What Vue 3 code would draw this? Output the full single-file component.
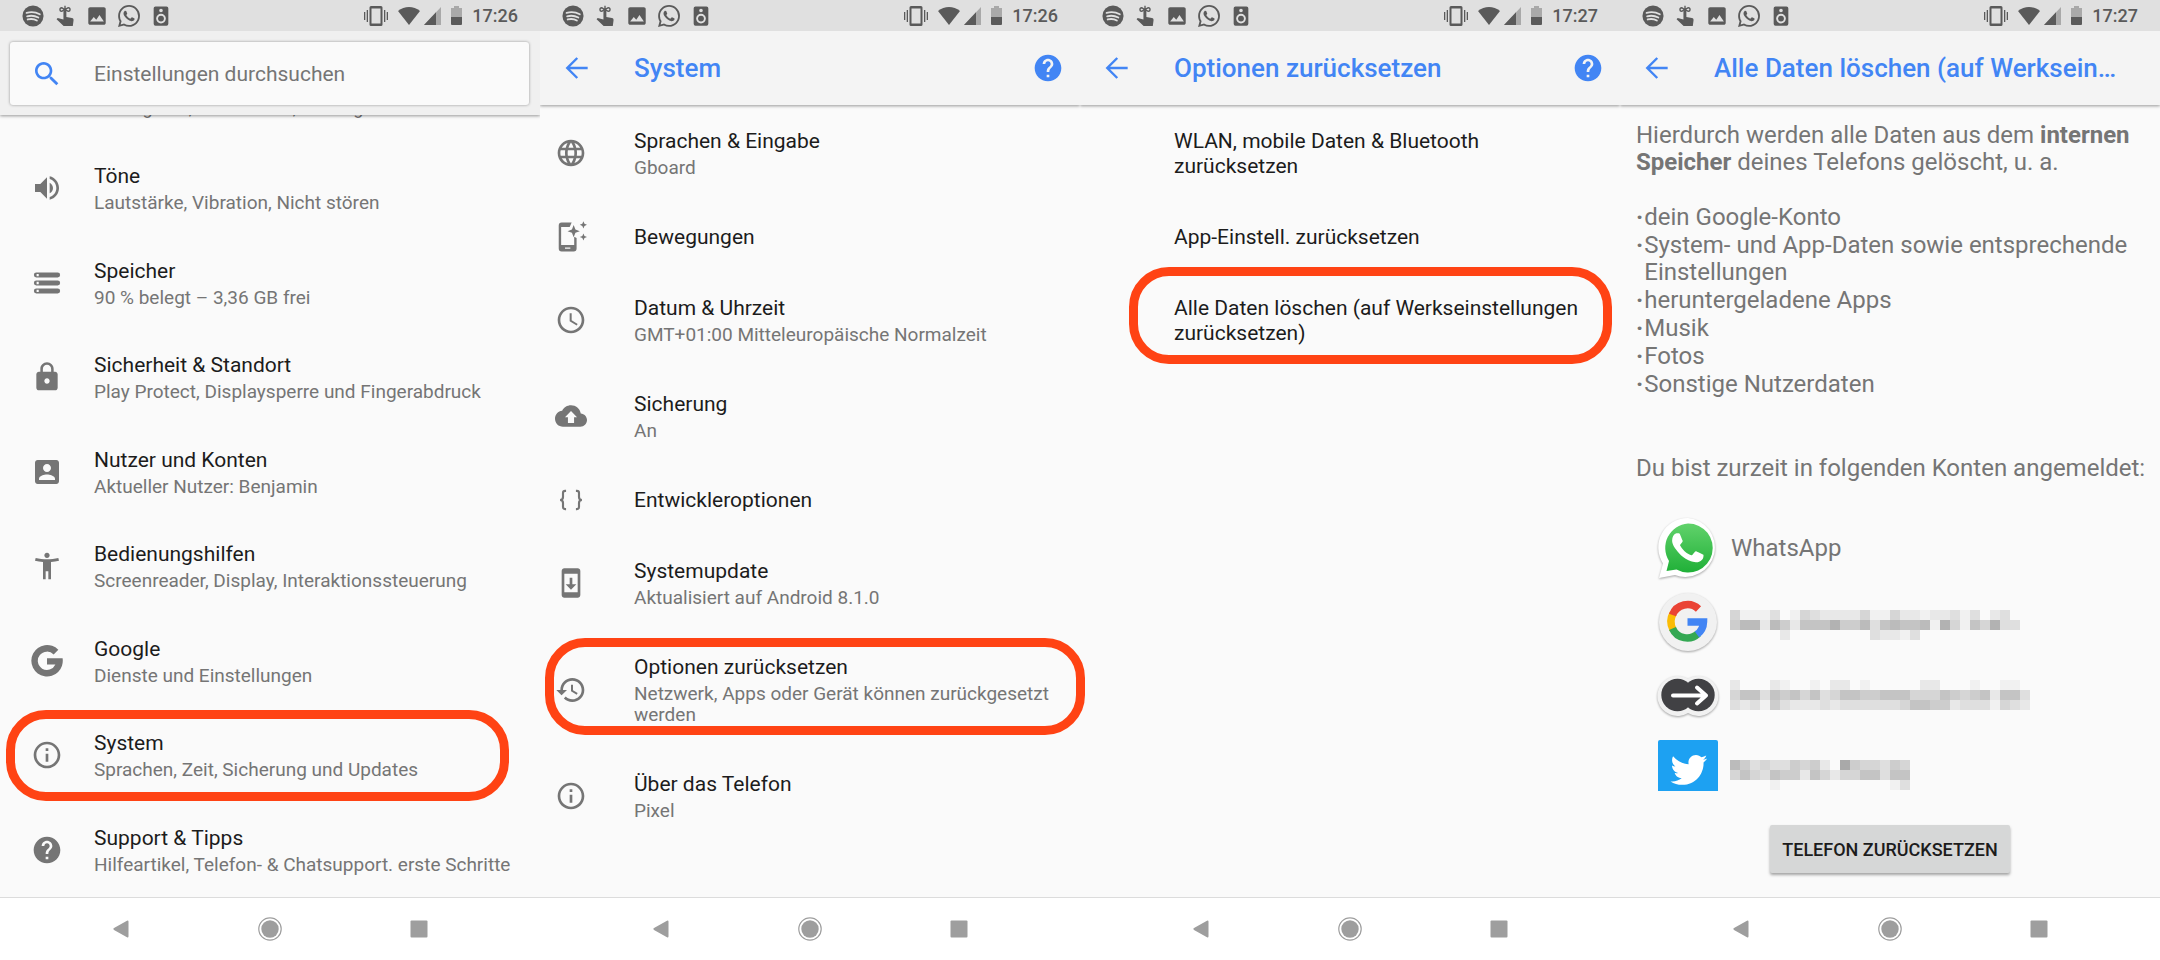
<template>
  <main class="board">
    <section v-for="screen in screens" :key="screen.id" class="phone" :class="screen.id">
      <div class="status-bar">
        <div class="status-group">
          <svg class="status-icon" viewBox="0 0 24 24">
            <circle cx="12" cy="12" r="11.5" />
            <path class="cut" d="M5 8.6c5-1.400 10-.9 14.400 1.500M5.600 12.300c4.200-1.100 8.400-.7 12.200 1.300M6.200 15.800c3.500-.9 7-.6 10 1.100" />
          </svg>
          <svg class="status-icon" viewBox="0 0 24 24">
            <path d="M10.300 6h3.200v7l6 1.200c1.500.300 2 1.200 1.800 2.600L20.500 23h-10L2.800 15.500 4 14.300l6.300 1.500z" />
            <path class="thin" d="M12 .8v6M8.500 3a2 2 0 1 0 0 4l3-2zM15.500 3a2 2 0 1 1 0 4l-3.500-2z" />
          </svg>
          <svg class="status-icon" viewBox="0 0 24 24">
            <path d="M21.500 19.500v-15c0-1.100-.9-2-2-2h-15c-1.100 0-2 .9-2 2v15c0 1.100.9 2 2 2h15c1.100 0 2-.9 2-2zM8.500 13l2.700 3.200 3.500-5.200 4.800 7h-15z" />
          </svg>
          <svg class="status-icon" viewBox="0 0 24 24"><path :d="handset + bubble" /></svg>
          <svg class="status-icon" viewBox="0 0 24 24">
            <path fill-rule="evenodd" d="M6 1.500h12a2 2 0 0 1 2 2v17a2 2 0 0 1-2 2H6a2 2 0 0 1-2-2v-17a2 2 0 0 1 2-2zM12 4a2 2 0 1 0 0 4 2 2 0 0 0 0-4zm0 5.500a5.300 5.300 0 1 0 0 10.600 5.300 5.300 0 0 0 0-10.600z" />
            <circle cx="12" cy="14.800" r="3.200" />
          </svg>
        </div>
        <div class="status-group">
          <svg class="vibrate" viewBox="0 0 24 20">
            <path fill-rule="evenodd" d="M7 0h10a1.500 1.500 0 0 1 1.500 1.500v17A1.500 1.500 0 0 1 17 20H7a1.500 1.500 0 0 1-1.500-1.500v-17A1.500 1.500 0 0 1 7 0zm.5 2.500v15h9v-15zM0 6h1.300v8H0zM2.700 4H4v12H2.700zM20 4h1.300v12H20zM22.700 6H24v8h-1.300z" />
          </svg>
          <div class="signal-pair">
            <svg class="wifi" viewBox="0 0 22 18"><path d="M11 18L0 4C6.500-1.300 15.500-1.300 22 4z" /></svg>
            <svg class="cell" viewBox="0 0 17 18">
              <path class="faded" d="M17 0v18H0z" />
              <path d="M12 5.300V18H0z" />
            </svg>
          </div>
          <svg class="battery" viewBox="0 0 11 19">
            <path class="faded" d="M3 0h5v2h3v9H0V2h3z" />
            <path d="M0 11h11v7a1 1 0 0 1-1 1H1a1 1 0 0 1-1-1z" />
          </svg>
          <time>{{ screen.time }}</time>
        </div>
      </div>

      <header v-if="screen.id === 'settings'" class="search-header">
        <label class="search-card">
          <svg class="icon" viewBox="0 0 24 24"><path :d="icons.search" /></svg>
          <input v-model="query" type="text" placeholder="Einstellungen durchsuchen" aria-label="Einstellungen durchsuchen" />
        </label>
      </header>
      <header v-else class="app-bar">
        <button type="button" class="bar-btn" aria-label="Zurück">
          <svg class="icon" viewBox="0 0 24 24"><path class="arrow" d="M20 12H5M12.200 4.500L4.700 12l7.500 7.500" /></svg>
        </button>
        <h1>{{ screen.title }}</h1>
        <button v-if="screen.help" type="button" class="bar-btn" aria-label="Hilfe">
          <svg class="icon" viewBox="0 0 24 24"><path :d="icons.help" /></svg>
        </button>
      </header>

      <template v-if="screen.rows">
        <div v-if="screen.scrolled" class="cut-off">
          <a href="#" class="row">
            <span class="row-text">
              <span class="row-summary">{{ screen.scrolled }}</span>
            </span>
          </a>
        </div>
        <ul class="list">
          <li v-for="row in screen.rows" :key="row.title">
            <a href="#" class="row">
              <svg v-if="row.icon" class="icon" viewBox="0 0 24 24">
                <path :class="{ line: row.line }" :d="icons[row.icon]" />
              </svg>
              <span class="row-text">
                <span class="row-title">{{ row.title }}</span>
                <span v-if="row.summary" class="row-summary">{{ row.summary }}</span>
              </span>
            </a>
            <span v-if="row.marked" class="marker"></span>
          </li>
        </ul>
      </template>

      <template v-else>
        <div class="details">
          <p>Hierdurch werden alle Daten aus dem <b>internen Speicher</b> deines Telefons gelöscht, u. a.</p>
          <ul class="bullets">
            <li v-for="item in erased" :key="item"><span class="dot">·</span><span>{{ item }}</span></li>
          </ul>
          <p>Du bist zurzeit in folgenden Konten angemeldet:</p>
          <ul class="accounts">
            <li>
              <svg class="logo" viewBox="0 0 60 62">
                <defs>
                  <linearGradient id="wa" x1="0" y1="0" x2="0" y2="1">
                    <stop offset="0" stop-color="#61d26b" />
                    <stop offset="1" stop-color="#20b038" />
                  </linearGradient>
                </defs>
                <path class="plate" d="M30 1a29.500 29.500 0 1 1-13 57L1 61l4-14.500A29.500 29.500 0 0 1 30 1z" />
                <path fill="url(#wa)" d="M30 6.500a24.500 24.500 0 1 1-11.500 46L8.500 54l2.500-10A24.500 24.500 0 0 1 30 6.500z" />
                <path class="white" transform="translate(-1.500 -.5) scale(2.600)" :d="handset" />
              </svg>
              <span>WhatsApp</span>
            </li>
            <li>
              <svg class="logo" viewBox="0 0 60 62">
                <circle class="plate grey" cx="30" cy="31" r="29" />
                <g class="g-arcs">
                  <path stroke="#fbbc05" d="M15.300 22a17 17 0 0 0-.3 16.500" />
                  <path stroke="#ea4335" d="M14.500 24A16 16 0 0 1 40.500 18" />
                  <path stroke="#34a853" d="M14.500 37.500A16 16 0 0 0 40.200 42.500" />
                  <path stroke="#4285f4" d="M39 43.500A16 16 0 0 0 45.500 31H29.500" />
                </g>
              </svg>
              <svg class="mosaic" width="300" height="40" shape-rendering="crispEdges" aria-hidden="true">
                <rect v-for="c in cells(mosaics[0])" :key="c.key" :x="c.x" :y="c.y" width="10" height="10" :fill="c.fill" />
              </svg>
            </li>
            <li>
              <svg class="logo" viewBox="0 0 60 62">
                <path class="plate grey" d="M20 11a20 20 0 0 1 10 2.800A20 20 0 1 1 30 48 20 20 0 1 1 20 11z" />
                <circle class="dark" cx="19.500" cy="30" r="16.200" />
                <circle class="dark" cx="40.500" cy="30" r="16.200" />
                <path class="white-line" d="M15 30.500h33M39 22.500l9 8-9 8" />
              </svg>
              <svg class="mosaic" width="300" height="40" shape-rendering="crispEdges" aria-hidden="true">
                <rect v-for="c in cells(mosaics[1])" :key="c.key" :x="c.x" :y="c.y" width="10" height="10" :fill="c.fill" />
              </svg>
            </li>
            <li>
              <svg class="logo" viewBox="0 0 60 62">
                <rect y="1" width="60" height="60" rx="2" fill="#1da1f2" />
                <path class="white" transform="translate(11 11.500) scale(1.620)" :d="bird" />
              </svg>
              <svg class="mosaic" width="300" height="40" shape-rendering="crispEdges" aria-hidden="true">
                <rect v-for="c in cells(mosaics[2])" :key="c.key" :x="c.x" :y="c.y" width="10" height="10" :fill="c.fill" />
              </svg>
            </li>
          </ul>
        </div>
        <footer class="action">
          <button type="button" class="reset-btn">TELEFON ZURÜCKSETZEN</button>
        </footer>
      </template>

      <nav class="nav-bar">
        <button type="button" aria-label="Zurück">
          <svg viewBox="0 0 24 24"><path d="M19.500 4.500v15a1 1 0 0 1-1.500.7L5 12.900a1 1 0 0 1 0-1.800L18 3.800a1 1 0 0 1 1.500.7z" /></svg>
        </button>
        <button type="button" aria-label="Startbildschirm">
          <svg viewBox="0 0 24 24">
            <circle cx="12" cy="12" r="8.700" />
            <circle class="ring" cx="12" cy="12" r="11.200" />
          </svg>
        </button>
        <button type="button" aria-label="Letzte Apps">
          <svg viewBox="0 0 24 24"><rect x="3.500" y="3.500" width="17" height="17" rx="1" /></svg>
        </button>
      </nav>
    </section>
  </main>
</template>

<script setup>
import { ref } from 'vue'

const query = ref('')

const icons = {
  search: 'M15.5 14h-.79l-.28-.27C15.41 12.59 16 11.11 16 9.500 16 5.910 13.090 3 9.500 3S3 5.910 3 9.500 5.910 16 9.500 16c1.610 0 3.090-.59 4.230-1.570l.27.28v.79l5 4.990L20.490 19l-4.990-5zm-6 0C7.010 14 5 11.990 5 9.500S7.010 5 9.500 5 14 7.010 14 9.500 11.990 14 9.500 14z',
  sound: 'M3 9v6h4l5 5V4L7 9H3zm13.5 3c0-1.770-1.020-3.290-2.500-4.030v8.050c1.480-.73 2.500-2.250 2.500-4.020zM14 3.230v2.060c2.890.86 5 3.540 5 6.710s-2.110 5.850-5 6.710v2.060c4.010-.91 7-4.490 7-8.770s-2.990-7.860-7-8.770z',
  storage: 'M4 4.200h16a1.850 1.850 0 0 1 0 3.700H4a1.850 1.850 0 0 1 0-3.700zm.2 1v1.700h1.600V5.200zM4 10.150h16a1.850 1.850 0 0 1 0 3.700H4a1.850 1.850 0 0 1 0-3.700zm.2 1v1.700h1.600v-1.700zM4 16.100h16a1.850 1.850 0 0 1 0 3.700H4a1.850 1.850 0 0 1 0-3.700zm.2 1v1.700h1.600v-1.700z',
  lock: 'M18 8h-1V6c0-2.760-2.240-5-5-5S7 3.240 7 6v2H6c-1.100 0-2 .9-2 2v10c0 1.100.9 2 2 2h12c1.100 0 2-.9 2-2V10c0-1.100-.9-2-2-2zm-6 9c-1.100 0-2-.9-2-2s.9-2 2-2 2 .9 2 2-.9 2-2 2zm3.100-9H8.900V6c0-1.710 1.390-3.100 3.100-3.100 1.710 0 3.100 1.390 3.100 3.100v2z',
  account: 'M3 5v14c0 1.100.89 2 2 2h14c1.100 0 2-.9 2-2V5c0-1.100-.9-2-2-2H5c-1.110 0-2 .9-2 2zm12 4c0 1.660-1.340 3-3 3s-3-1.340-3-3 1.340-3 3-3 3 1.340 3 3zm-9 8c0-2 4-3.100 6-3.100s6 1.100 6 3.100v1H6v-1z',
  accessibility: 'M20.500 6c-2.610.7-5.670 1-8.500 1s-5.890-.3-8.500-1L3 8c1.860.5 4 .83 6 1v13h2v-6h2v6h2V9c2-.17 4.140-.5 6-1l-.5-2zM12 6c1.100 0 2-.9 2-2s-.9-2-2-2-2 .9-2 2 .9 2 2 2z',
  google: 'M20.500 3.600A11.800 11.800 0 1 0 23.700 10H12v4.700h6.300A6.900 6.900 0 1 1 17 7.100z',
  info: 'M11 17h2v-6h-2v6zm1-15C6.480 2 2 6.480 2 12s4.480 10 10 10 10-4.480 10-10S17.520 2 12 2zm0 18c-4.410 0-8-3.590-8-8s3.590-8 8-8 8 3.590 8 8-3.590 8-8 8zM11 9h2V7h-2v2z',
  help: 'M12 2C6.480 2 2 6.480 2 12s4.480 10 10 10 10-4.480 10-10S17.520 2 12 2zm1 17h-2v-2h2v2zm2.070-7.750l-.9.92C13.450 12.900 13 13.500 13 15h-2v-.5c0-1.100.45-2.100 1.170-2.830l1.240-1.260c.37-.36.59-.86.59-1.410 0-1.100-.9-2-2-2s-2 .9-2 2H8c0-2.210 1.790-4 4-4s4 1.790 4 4c0 .88-.36 1.680-.93 2.250z',
  language: 'M11.990 2C6.470 2 2 6.480 2 12s4.470 10 9.990 10C17.520 22 22 17.520 22 12S17.520 2 11.990 2zm6.930 6h-2.950c-.32-1.250-.78-2.450-1.380-3.560 1.840.63 3.370 1.910 4.330 3.560zM12 4.040c.83 1.200 1.480 2.530 1.910 3.960h-3.820c.43-1.430 1.080-2.760 1.910-3.960zM4.260 14C4.100 13.360 4 12.690 4 12s.1-1.360.26-2h3.380c-.08.66-.14 1.320-.14 2 0 .68.06 1.340.14 2H4.260zm.82 2h2.950c.32 1.250.78 2.450 1.380 3.560-1.840-.63-3.370-1.900-4.330-3.560zm2.950-8H5.080c.96-1.660 2.490-2.930 4.330-3.560C8.810 5.550 8.350 6.750 8.030 8zM12 19.960c-.83-1.200-1.480-2.530-1.910-3.960h3.820c-.43 1.430-1.080 2.760-1.910 3.960zM14.340 14H9.660c-.09-.66-.16-1.320-.16-2 0-.68.07-1.350.16-2h4.680c.09.65.16 1.320.16 2 0 .68-.07 1.340-.16 2zm.25 5.560c.6-1.110 1.060-2.310 1.380-3.560h2.950c-.96 1.650-2.490 2.930-4.330 3.560zM16.360 14c.08-.66.14-1.320.14-2 0-.68-.06-1.340-.14-2h3.380c.16.64.26 1.310.26 2s-.1 1.360-.26 2h-3.380z',
  gestures: 'M12.500 1.200H5a2.200 2.200 0 0 0-2.200 2.200v17.200A2.200 2.200 0 0 0 5 22.800h9a2.200 2.200 0 0 0 2.200-2.200v-7.800l-1.800-1V18H4.600V4.500H11zM7.500 19.800h4v1h-4zM14 3l1.300 3.300 3.300 1.300-3.300 1.300L14 12.200l-1.300-3.300-3.300-1.300 3.300-1.300zM21.300.2l.8 1.900 1.900.8-1.900.8-.8 1.900-.8-1.900-1.900-.8 1.900-.8zM21.300 9.300l.8 1.900 1.900.8-1.900.8-.8 1.900-.8-1.900-1.900-.8 1.900-.8z',
  clock: 'M11.990 2C6.470 2 2 6.480 2 12s4.470 10 9.990 10C17.520 22 22 17.520 22 12S17.520 2 11.990 2zM12 20c-4.420 0-8-3.580-8-8s3.580-8 8-8 8 3.580 8 8-3.580 8-8 8zm.5-13H11v6l5.250 3.150.75-1.230-4.500-2.670z',
  backup: 'M19.350 10.040C18.670 6.590 15.640 4 12 4 9.110 4 6.600 5.640 5.350 8.040 2.340 8.360 0 10.910 0 14c0 3.310 2.690 6 6 6h13c2.760 0 5-2.240 5-5 0-2.640-2.050-4.780-4.650-4.960zM14.300 13v4.200H9.700V13H7.500L12 8.200l4.500 4.800z',
  braces: 'M8.300 5.200H7.600c-1 0-1.600.6-1.600 1.600v3c0 1.300-.8 2.200-2.200 2.200C5.200 12 6 12.900 6 14.200v3c0 1 .6 1.600 1.600 1.600h.7M15.700 5.200h.7c1 0 1.600.6 1.600 1.600v3c0 1.300.8 2.200 2.200 2.200-1.400 0-2.200.9-2.200 2.200v3c0 1-.6 1.600-1.600 1.600h-.7',
  update: 'M17 1.010L7 1c-1.100 0-2 .9-2 2v18c0 1.100.9 2 2 2h10c1.100 0 2-.9 2-2V3c0-1.100-.9-1.990-2-1.990zM17 19H7V5h10v14zm-1-6h-3V8h-2v5H8l4 4 4-4z',
  restore: 'M13 3c-4.970 0-9 4.030-9 9H1l3.890 3.890.07.14L9 12H6c0-3.870 3.130-7 7-7s7 3.130 7 7-3.130 7-7 7c-1.930 0-3.680-.79-4.940-2.060l-1.420 1.420C8.270 19.990 10.510 21 13 21c4.970 0 9-4.030 9-9s-4.030-9-9-9zm-1 5v5l4.280 2.540.72-1.210-3.500-2.080V8H12z'
}

const handset =
  'M17.472 14.382c-.297-.149-1.758-.867-2.030-.967-.273-.099-.471-.148-.67.15-.197.297-.767.966-.94 1.164-.173.199-.347.223-.644.075-.297-.15-1.255-.463-2.390-1.475-.883-.788-1.480-1.761-1.653-2.059-.173-.297-.018-.458.13-.606.134-.133.298-.347.446-.52.149-.174.198-.298.298-.497.099-.198.05-.371-.025-.52-.075-.149-.669-1.612-.916-2.207-.242-.579-.487-.5-.669-.51-.173-.008-.371-.01-.57-.01-.198 0-.52.074-.792.372-.272.297-1.040 1.016-1.040 2.479 0 1.462 1.065 2.875 1.213 3.074.149.198 2.096 3.200 5.077 4.487.709.306 1.262.489 1.694.625.712.227 1.360.195 1.871.118.571-.085 1.758-.719 2.006-1.413.248-.694.248-1.289.173-1.413-.074-.124-.272-.198-.57-.347'
const bubble =
  'm-5.421 7.403h-.004a9.870 9.870 0 01-5.031-1.378l-.361-.214-3.741.982.998-3.648-.235-.374a9.860 9.860 0 01-1.510-5.260c.001-5.450 4.436-9.884 9.888-9.884 2.640 0 5.122 1.030 6.988 2.898a9.825 9.825 0 012.893 6.994c-.003 5.450-4.437 9.884-9.885 9.884m8.413-18.297A11.815 11.815 0 0012.050 0C5.495 0 .16 5.335.157 11.892c0 2.096.547 4.142 1.588 5.945L.057 24l6.305-1.654a11.882 11.882 0 005.683 1.448h.005c6.554 0 11.890-5.335 11.893-11.893a11.821 11.821 0 00-3.480-8.413z'
const bird =
  'M23.643 4.937c-.835.37-1.732.62-2.675.733.962-.576 1.700-1.490 2.048-2.578-.9.534-1.897.922-2.958 1.130-.85-.904-2.060-1.470-3.400-1.470-2.572 0-4.658 2.086-4.658 4.660 0 .364.042.718.12 1.060-3.873-.195-7.304-2.050-9.602-4.868-.4.69-.63 1.490-.63 2.342 0 1.616.823 3.043 2.072 3.878-.764-.025-1.482-.234-2.110-.583v.06c0 2.257 1.605 4.140 3.737 4.568-.392.106-.803.162-1.227.162-.3 0-.593-.028-.877-.082.593 1.850 2.313 3.198 4.352 3.234-1.595 1.250-3.604 1.995-5.786 1.995-.376 0-.747-.022-1.112-.065 2.062 1.323 4.510 2.093 7.140 2.093 8.570 0 13.255-7.098 13.255-13.254 0-.2-.005-.402-.014-.602.91-.658 1.700-1.477 2.323-2.410z'

const screens = [
  {
    id: 'settings',
    time: '17:26',
    scrolled: 'Hintergrund, Ruhemodus, Schriftgröße',
    rows: [
      { icon: 'sound', title: 'Töne', summary: 'Lautstärke, Vibration, Nicht stören' },
      { icon: 'storage', title: 'Speicher', summary: '90 % belegt – 3,36 GB frei' },
      { icon: 'lock', title: 'Sicherheit & Standort', summary: 'Play Protect, Displaysperre und Fingerabdruck' },
      { icon: 'account', title: 'Nutzer und Konten', summary: 'Aktueller Nutzer: Benjamin' },
      { icon: 'accessibility', title: 'Bedienungshilfen', summary: 'Screenreader, Display, Interaktionssteuerung' },
      { icon: 'google', title: 'Google', summary: 'Dienste und Einstellungen' },
      { icon: 'info', title: 'System', summary: 'Sprachen, Zeit, Sicherung und Updates', marked: true },
      { icon: 'help', title: 'Support & Tipps', summary: 'Hilfeartikel, Telefon- & Chatsupport. erste Schritte' }
    ]
  },
  {
    id: 'system',
    time: '17:26',
    title: 'System',
    help: true,
    rows: [
      { icon: 'language', title: 'Sprachen & Eingabe', summary: 'Gboard' },
      { icon: 'gestures', title: 'Bewegungen' },
      { icon: 'clock', title: 'Datum & Uhrzeit', summary: 'GMT+01:00 Mitteleuropäische Normalzeit' },
      { icon: 'backup', title: 'Sicherung', summary: 'An' },
      { icon: 'braces', title: 'Entwickleroptionen', line: true },
      { icon: 'update', title: 'Systemupdate', summary: 'Aktualisiert auf Android 8.1.0' },
      { icon: 'restore', title: 'Optionen zurücksetzen', summary: 'Netzwerk, Apps oder Gerät können zurückgesetzt werden', marked: true },
      { icon: 'info', title: 'Über das Telefon', summary: 'Pixel' }
    ]
  },
  {
    id: 'reset',
    time: '17:27',
    title: 'Optionen zurücksetzen',
    help: true,
    rows: [
      { title: 'WLAN, mobile Daten & Bluetooth zurücksetzen' },
      { title: 'App-Einstell. zurücksetzen' },
      { title: 'Alle Daten löschen (auf Werkseinstellungen zurücksetzen)', marked: true }
    ]
  },
  { id: 'erase', time: '17:27', title: 'Alle Daten löschen (auf Werksein…' }
]

const erased = [
  'dein Google-Konto',
  'System- und App-Daten sowie entsprechende Einstellungen',
  'heruntergeladene Apps',
  'Musik',
  'Fotos',
  'Sonstige Nutzerdaten'
]

// pixelated account names, one digit per cell, 0 = background, 9 = darkest
const mosaics = [
  { top: 8, rows: ['41113014322224114221223130230', '57727526668557367667184164833', '00000200000000322130000000000'] },
  { top: 4, rows: ['200021001022010000022000100110', '466365646346655666444654562663', '323153222323333334665523331432'] },
  { top: 10, rows: ['753433545209544354', '464365526424466366', '000010000000000013'] }
]

const cells = ({ top, rows }) =>
  rows.flatMap((row, y) =>
    [...row].map((level, x) => {
      const tone = 250 - level * 9
      return { key: `${x}-${y}`, x: x * 10, y: top + y * 10, fill: `rgb(${tone}, ${tone}, ${tone})` }
    })
  )
</script>

<style>
body {
  margin: 0;
  background: #fafafa;
}
</style>

<style scoped>
.board {
  display: grid;
  grid-template-columns: repeat(4, minmax(0, 1fr));
  min-height: 100vh;
  overflow: hidden;
  font-family: Roboto, 'Liberation Sans', sans-serif;
  color: #1c1c1c;
}

.phone {
  display: flex;
  flex-direction: column;
  background: #fafafa;
}

ul {
  margin: 0;
  padding: 0;
  list-style: none;
}

button {
  border: 0;
  background: none;
  padding: 0;
  font-family: inherit;
  cursor: pointer;
}

svg {
  display: block;
  flex: none;
}

.status-bar {
  height: 31px;
  box-sizing: border-box;
  padding: 0 22px;
  display: flex;
  align-items: center;
  justify-content: space-between;
  background: #e0e0e0;
  color: #5a5a5a;
  fill: #5a5a5a;
}

.status-group {
  display: flex;
  align-items: center;
  gap: 10px;
}

.status-icon {
  width: 22px;
  height: 22px;
}

.cut {
  fill: none;
  stroke: #e0e0e0;
  stroke-width: 2;
  stroke-linecap: round;
}

.thin {
  fill: none;
  stroke: #5a5a5a;
  stroke-width: 1.5;
}

.faded {
  fill: #a9a9a9;
}

.signal-pair {
  display: flex;
  gap: 4px;
}

.vibrate {
  width: 24px;
  height: 20px;
}

.wifi {
  width: 22px;
  height: 18px;
}

.cell {
  width: 17px;
  height: 18px;
}

.battery {
  width: 11px;
  height: 19px;
}

time {
  font-size: 18px;
  font-weight: 500;
}

/* the clip keeps each shadow below its own header */
.search-header,
.app-bar {
  position: relative;
  z-index: 1;
  box-shadow: 0 1px 3px rgba(0, 0, 0, 0.4);
  clip-path: inset(0 0 -6px 0);
}

.search-header {
  padding: 11px 11px 10px 10px;
  background: #f0f0f0;
}

.search-card {
  display: flex;
  align-items: center;
  gap: 31px;
  height: 63px;
  padding: 0 21px;
  border-radius: 3px;
  background: #fafafa;
  box-shadow: 0 0 3px rgba(0, 0, 0, 0.4);
  fill: #4285f4;
}

.search-card input {
  flex: 1;
  min-width: 0;
  border: 0;
  padding: 0;
  outline: none;
  background: none;
  font-family: inherit;
  font-size: 21px;
  color: #1c1c1c;
}

.search-card input::placeholder {
  color: #757575;
  opacity: 1;
}

.app-bar {
  display: flex;
  align-items: center;
  height: 74px;
  padding: 0 16px 0 21px;
  background: #f4f4f4;
}

.app-bar h1 {
  flex: 1;
  margin: 0 0 0 41px;
  font-size: 26px;
  line-height: 32px;
  font-weight: 500;
  white-space: nowrap;
  color: #4285f4;
}

.bar-btn {
  fill: #4285f4;
}

.arrow {
  fill: none;
  stroke: #4285f4;
  stroke-width: 1.8;
}

.icon {
  width: 32px;
  height: 32px;
}

.cut-off {
  display: flex;
  align-items: flex-end;
  height: 26px;
  overflow: hidden;
}

.list {
  flex: 1;
}

.settings .list {
  display: flex;
  flex-direction: column;
}

.list li {
  position: relative;
}

.settings .list li {
  display: flex;
  flex: 1;
}

.row {
  display: flex;
  flex: 1;
  align-items: center;
  gap: 47px;
  box-sizing: border-box;
  padding: 0 21px 0 15px;
  color: inherit;
  text-decoration: none;
  fill: #757575;
}

.settings .row {
  gap: 31px;
  padding: 0 16px 0 31px;
}

.settings .cut-off .row,
.reset .row {
  padding-left: 94px;
}

.line {
  fill: none;
  stroke: #757575;
  stroke-width: 1.6;
}

.row-text {
  display: flex;
  flex-direction: column;
  padding: 24px 0 22px;
}

.settings .row-text {
  padding: 22px 0 20px;
}

.settings .cut-off .row-text {
  padding: 0 0 22px;
}

.row-title {
  font-size: 21px;
  line-height: 25px;
}

.row-summary {
  margin: 3px 0 1px;
  font-size: 19px;
  line-height: 21px;
  color: #757575;
}

.cut-off .row-summary {
  font-size: 18px;
}

.marker {
  position: absolute;
  border: 9px solid #ff4314;
  border-radius: 40px;
  pointer-events: none;
}

.settings .marker {
  inset: 2px 31px 2px 6px;
}

.system .marker {
  inset: 7px -5px 13px 5px;
  z-index: 2;
}

.reset .marker {
  inset: -5px 8px 4px 49px;
}

.details {
  flex: 1 1 0;
  min-height: 0;
  overflow: hidden;
  padding: 17px 8px 0 16px;
  font-size: 24px;
  line-height: 27px;
  color: #757575;
}

.details p {
  margin: 0;
}

.bullets {
  display: grid;
  gap: 1px;
  margin: 28px 0 57px;
}

.bullets li {
  display: flex;
  gap: 1px;
}

.dot {
  font-weight: 700;
}

.accounts {
  margin-top: 29px;
}

.accounts li {
  display: flex;
  align-items: center;
  gap: 13px;
  height: 74px;
  padding-left: 22px;
}

.logo {
  width: 60px;
  height: 62px;
  overflow: visible;
}

.mosaic {
  margin-left: -1px;
}

.plate {
  fill: #ffffff;
  filter: drop-shadow(0 1px 1px rgba(0, 0, 0, 0.35));
}

.grey {
  fill: #f1f1f1;
}

.dark {
  fill: #414144;
}

.white {
  fill: #ffffff;
}

.white-line {
  fill: none;
  stroke: #ffffff;
  stroke-width: 4;
  stroke-linecap: round;
  stroke-linejoin: round;
}

.g-arcs {
  fill: none;
  stroke-width: 7.5;
}

.action {
  display: flex;
  justify-content: center;
  padding: 34px 0 24px;
}

.reset-btn {
  height: 48px;
  padding: 0 12px;
  border-radius: 2px;
  background: #d6d7d7;
  box-shadow: 0 2px 3px rgba(0, 0, 0, 0.35);
  font-size: 18px;
  font-weight: 500;
  color: #1c1c1c;
}

.nav-bar {
  display: flex;
  height: 62px;
  padding: 0 46px;
  border-top: 1px solid #dcdcdc;
  background: #ffffff;
  fill: #9e9e9e;
}

.nav-bar button {
  display: flex;
  flex: 1;
  align-items: center;
  justify-content: center;
}

.nav-bar svg {
  width: 24px;
  height: 24px;
  overflow: visible;
}

.ring {
  fill: none;
  stroke: #9e9e9e;
  stroke-width: 1.2;
}
</style>
